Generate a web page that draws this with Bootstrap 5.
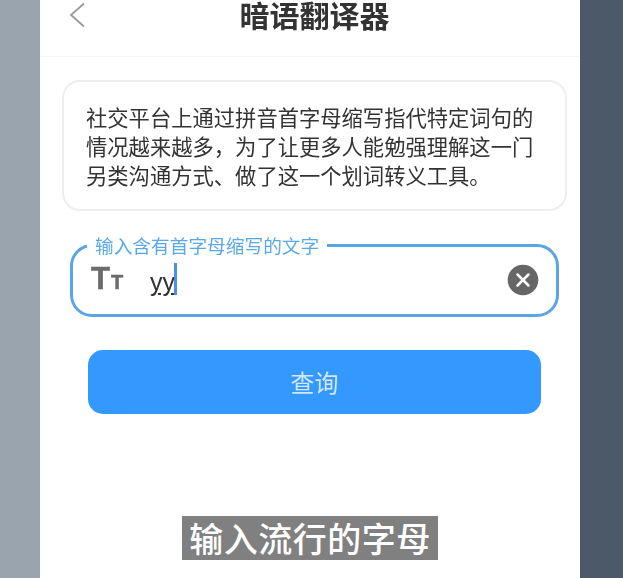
<!DOCTYPE html>
<html lang="zh-CN">
<head>
<meta charset="utf-8">
<title>暗语翻译器</title>
<link href="https://cdn.jsdelivr.net/npm/bootstrap@5.3.0/dist/css/bootstrap.min.css" rel="stylesheet">
<style>
html,body{height:100%;margin:0;overflow:hidden}
body{font-family:"Noto Sans CJK SC","Liberation Sans",sans-serif;background:#fff}
.stage{height:578px}
.side-l{width:40px;background:#9aa4af}
.side-r{width:43px;background:#4b5969}
.phone{width:540px;position:relative;background:#fff}
.top-bar{height:57px;padding-left:9px;border-bottom:1px solid #f5f5f5;filter:blur(.4px)}
.back-ico{position:absolute;left:29px;top:2px}
.page-title{font-size:30px;font-weight:700;line-height:29px;color:#333;margin:0;text-align:center}
.body-wrap{padding:23px 13px 0 22px;filter:blur(.4px)}
.intro{border:2px solid #eee;border-radius:18px;height:131px;padding:20px 22px 0;font-size:21.3px;line-height:29px;color:#333;white-space:nowrap}
.term-box{margin:24px 8px 0;border:3px solid #5aa5e6;border-radius:22px;padding:0 17px 9px 19px;min-width:0}
.term-box legend{float:none;width:auto;font-size:18.7px;line-height:20px;color:#5aa9e6;margin:0 0 0 -5px;padding:0 8px}
.term-row{height:50px}
.tt-ico{width:58px;color:#6b6b6b;font-family:"Liberation Sans",sans-serif;font-weight:700;line-height:1;margin-top:-3px;margin-left:-1px;margin-right:1px;-webkit-text-stroke:.5px #6b6b6b}
.tt-big{font-size:31px;margin-right:1px}
.tt-small{font-size:20px}
.typed{font-family:"Liberation Sans",sans-serif;font-size:25px;line-height:28px;color:#333;margin-top:4px;text-decoration:underline;text-underline-offset:2px;text-decoration-thickness:1.5px}
.caret-bar{width:3px;height:32px;background:#4a90e2;margin-left:-1px;margin-top:-3px}
.btn.go-btn{display:block;margin:33px 26px 0;width:453px;height:64px;background:#3399ff;border:0;border-radius:15px;color:#d3e7fb;font-size:24px;line-height:64px;padding:0}
.sub-cap{position:absolute;left:142px;top:516px;width:256px;height:44px;background:#808080;color:#fff;font-size:34px;font-weight:500;line-height:44px;text-align:center;letter-spacing:.5px;white-space:nowrap}
</style>
</head>
<body>
<div class="stage d-flex">
  <div class="side-l flex-shrink-0"></div>
  <div class="phone flex-shrink-0">
    <header class="top-bar">
      <svg class="back-ico" width="18" height="26" viewBox="0 0 18 26" aria-hidden="true"><polyline points="15,1.5 2,13 15,24.5" fill="none" stroke="#999" stroke-width="1.8"/></svg>
      <h1 class="page-title">暗语翻译器</h1>
    </header>
    <main class="body-wrap">
      <div class="intro">社交平台上通过拼音首字母缩写指代特定词句的<br>情况越来越多，为了让更多人能勉强理解这一门<br>另类沟通方式、做了这一个划词转义工具。</div>
      <fieldset class="term-box">
        <legend>输入含有首字母缩写的文字</legend>
        <div class="term-row d-flex align-items-center">
          <span class="tt-ico flex-shrink-0"><span class="tt-big">T</span><span class="tt-small">T</span></span>
          <span class="typed">yy</span><span class="caret-bar"></span>
          <svg class="ms-auto flex-shrink-0" width="32" height="32" viewBox="0 0 32 32" aria-hidden="true"><circle cx="16" cy="16" r="15.3" fill="#666"/><path d="M10.5 10.5 21.5 21.5M21.5 10.5 10.5 21.5" stroke="#fff" stroke-width="2.5" stroke-linecap="round"/></svg>
        </div>
      </fieldset>
      <button type="button" class="btn go-btn">查询</button>
    </main>
    <div class="sub-cap">输入流行的字母</div>
  </div>
  <div class="side-r flex-shrink-0"></div>
</div>
<script src="https://cdn.jsdelivr.net/npm/bootstrap@5.3.0/dist/js/bootstrap.bundle.min.js"></script>
</body>
</html>
